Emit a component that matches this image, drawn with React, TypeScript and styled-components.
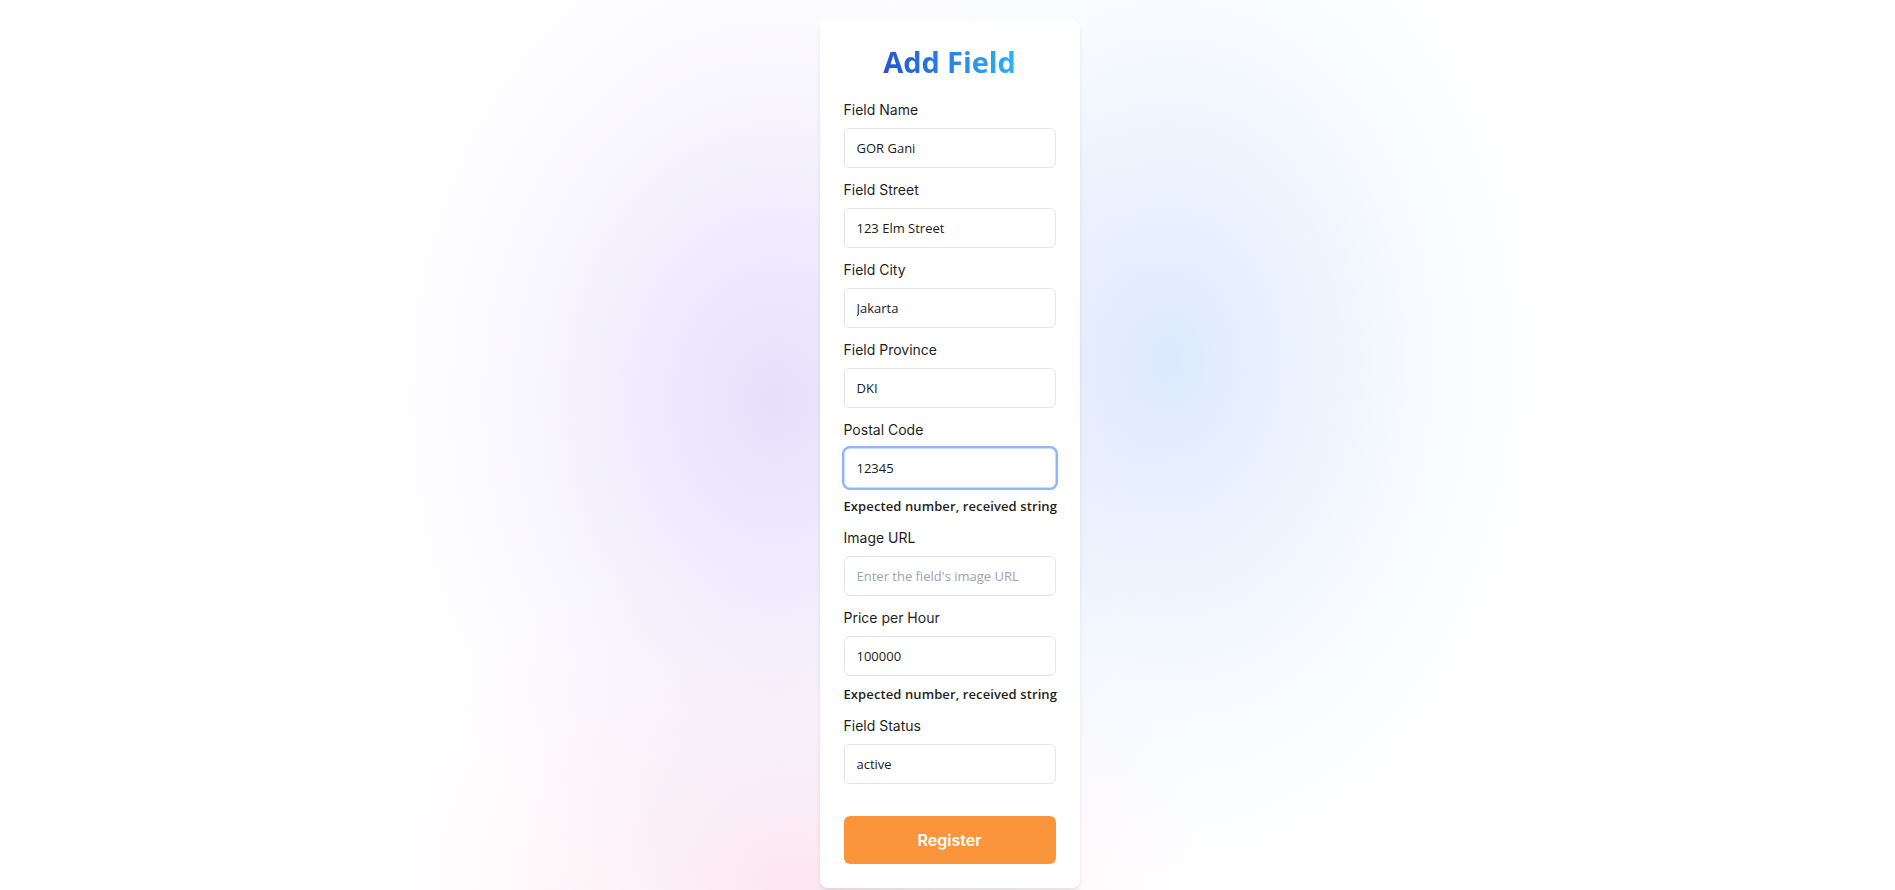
import React from "react";
import styled, { createGlobalStyle } from "styled-components";

const GlobalStyle = createGlobalStyle`
  *, *::before, *::after { box-sizing: border-box; }
  html, body { margin: 0; padding: 0; }
  body {
    font-family: Inter, "Noto Sans", sans-serif;
    background: #ffffff;
  }
`;

const Page = styled.div`
  min-height: 890px;
  width: 100%;
  display: flex;
  justify-content: center;
  align-items: flex-start;
  padding: 20px 0 0 4px;
  background:
    radial-gradient(ellipse 400px 520px at 775px 400px,
      rgba(228, 220, 252, 0.9) 0%,
      rgba(228, 220, 252, 0.6) 30%,
      rgba(228, 220, 252, 0.2) 65%,
      rgba(228, 220, 252, 0) 100%),
    radial-gradient(ellipse 380px 520px at 1170px 360px,
      rgba(216, 230, 253, 0.9) 0%,
      rgba(216, 230, 253, 0.55) 30%,
      rgba(216, 230, 253, 0.2) 65%,
      rgba(216, 230, 253, 0) 100%),
    radial-gradient(ellipse 420px 340px at 790px 890px,
      rgba(252, 224, 236, 0.8) 0%,
      rgba(252, 224, 236, 0.45) 35%,
      rgba(252, 224, 236, 0.15) 70%,
      rgba(252, 224, 236, 0) 100%),
    #ffffff;
`;

const Card = styled.div`
  width: 260px;
  background: #ffffff;
  border-radius: 8px;
  padding: 24px;
  box-shadow: 0 4px 6px -1px rgba(0, 0, 0, 0.08), 0 2px 4px -2px rgba(0, 0, 0, 0.08);
  display: flex;
  flex-direction: column;
`;

const Title = styled.h1`
  margin: 0 0 20px;
  text-align: center;
  font-family: "Open Sans", "Noto Sans", sans-serif;
  font-weight: 700;
  font-size: 29px;
  line-height: 36px;
  letter-spacing: -0.1px;
`;

const GradientText = styled.span`
  display: inline-block;
  background: linear-gradient(to right, #2455d6, #2bb3f5);
  -webkit-background-clip: text;
  background-clip: text;
  color: transparent;
`;

const Form = styled.form`
  display: flex;
  flex-direction: column;
  gap: 12px;
`;

const Group = styled.div`
  display: flex;
  flex-direction: column;
`;

const Label = styled.label`
  font-family: Inter, sans-serif;
  font-size: 14px;
  line-height: 20px;
  font-weight: 400;
  color: #1f1f23;
  margin-bottom: 8px;
`;

const Input = styled.input<{ $focused?: boolean }>`
  height: 40px;
  width: 100%;
  padding: 0 12px;
  border-radius: 6px;
  border: 1px solid ${(p) => (p.$focused ? "#c9dcfb" : "#e3e4e8")};
  box-shadow: ${(p) => (p.$focused ? "0 0 0 2px #8fb6f7" : "none")};
  background: #ffffff;
  font-family: "Open Sans", "Noto Sans", sans-serif;
  font-size: 13px;
  color: #1a1a1a;
  outline: none;
  &::placeholder {
    color: #9ca3af;
  }
`;

const ErrorText = styled.p`
  margin: 8px 0 0;
  font-family: "Open Sans", "Noto Sans", sans-serif;
  font-size: 13px;
  letter-spacing: 0.1px;
  line-height: 20px;
  font-weight: 600;
  color: #1f1f23;
  white-space: nowrap;
`;

const Button = styled.button`
  margin-top: 20px;
  height: 48px;
  width: 100%;
  border: none;
  border-radius: 6px;
  background: #fb953c;
  color: #ffffff;
  font-family: Inter, sans-serif;
  font-weight: 600;
  font-size: 16px;
  cursor: pointer;
`;

type Field = {
  label: string;
  value?: string;
  placeholder?: string;
  error?: string;
  focused?: boolean;
};

const fields: Field[] = [
  { label: "Field Name", value: "GOR Gani" },
  { label: "Field Street", value: "123 Elm Street" },
  { label: "Field City", value: "Jakarta" },
  { label: "Field Province", value: "DKI" },
  { label: "Postal Code", value: "12345", error: "Expected number, received string", focused: true },
  { label: "Image URL", placeholder: "Enter the field's image URL" },
  { label: "Price per Hour", value: "100000", error: "Expected number, received string" },
  { label: "Field Status", value: "active" },
];

export default function App() {
  return (
    <>
      <GlobalStyle />
      <Page>
        <Card>
          <Title>
            <GradientText>Add Field</GradientText>
          </Title>
          <Form onSubmit={(e) => e.preventDefault()}>
            {fields.map((f) => (
              <Group key={f.label}>
                <Label>{f.label}</Label>
                <Input
                  $focused={f.focused}
                  defaultValue={f.value}
                  placeholder={f.placeholder}
                  readOnly
                />
                {f.error && <ErrorText>{f.error}</ErrorText>}
              </Group>
            ))}
            <Button type="submit">Register</Button>
          </Form>
        </Card>
      </Page>
    </>
  );
}
